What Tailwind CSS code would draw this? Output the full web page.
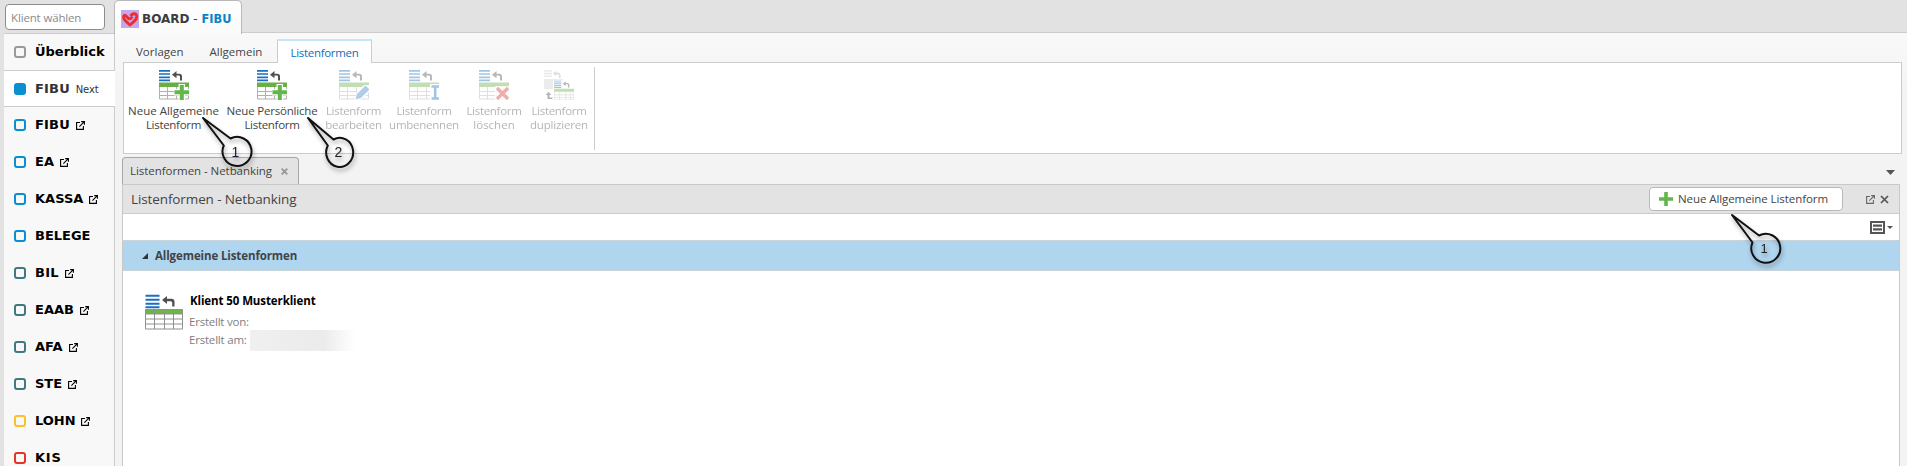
<!DOCTYPE html>
<html lang="de">
<head>
<meta charset="utf-8">
<title>BOARD - FIBU</title>
<script src="https://cdn.jsdelivr.net/npm/@tailwindcss/browser@4"></script>
</head>
<body class="relative flex h-[466px] w-[1907px] overflow-hidden bg-[#e2e2e2] font-['Open_Sans','Noto_Sans',sans-serif] text-[11.5px] text-[#444]">

<svg class="hidden">
  <symbol id="list" viewBox="0 0 30 30">
    <path d="M0 .8h11M0 4h11M0 7.3h11M0 10.4h11" stroke="#1b6fc0" stroke-width="1.7"/>
    <path d="M13 4.7l4.500-3.700v2.700h2.800q2.700 0 2.700 2.700v4.100h-2v-3.700q0-1.300-1.300-1.300h-2.200v2.700z" fill="#505050"/>
    <path d="M.5 17v12h29V17M0 21.500h30M0 25.500h30M8.500 17v12M17.500 17v12M24.500 17v12" fill="none" stroke="#b0b0b0"/>
    <path d="M0 12.500h30v4.500H0z" fill="#6aae48"/>
  </symbol>
  <symbol id="listadd" viewBox="0 0 30 30">
    <use href="#list" width="30" height="30"/>
    <path d="M22.800 14v16M15 22.300h16" stroke="#fff" stroke-width="6.500"/>
    <path d="M22.800 15v15M15.500 22.300h14.500" stroke="#63b64a" stroke-width="4"/>
  </symbol>
  <symbol id="pop" viewBox="0 0 9 9">
    <path d="M4 1.500H.6v6.900h6.800V5M5.200.6h3.200v3.200M8.300.7L3.400 5.600" fill="none" stroke="currentColor" stroke-width="1.100"/>
  </symbol>
  <linearGradient id="bubble" x1="0" y1="0" x2="1" y2="1"><stop offset="0" stop-color="#aaa"/><stop offset=".6" stop-color="#e4e4e4"/><stop offset="1" stop-color="#d8d8d8"/></linearGradient>
</svg>

<!-- Sidebar -->
<aside class="flex w-[115px] shrink-0 flex-col pl-1">
  <div class="h-[33px] shrink-0 px-px pt-1">
    <div class="flex h-[26px] w-[100px] items-center rounded-[4px] border border-[#8c8c8c] bg-white pl-[5px] pb-px pt-0.5 tracking-[-0.15px] text-[#8b8b8b]">Klient wählen</div>
  </div>
  <nav class="flex h-[433px] flex-col overflow-hidden bg-[#f8f8f8] font-['DejaVu_Sans',sans-serif] text-[13px] font-bold text-black">
    <div class="flex h-[37px] shrink-0 items-center gap-[9px] border-t border-r border-[#ccc] pl-2.5"><i class="size-3 rounded-[3px] border-2 border-[#999]"></i>Überblick</div>
    <div class="flex h-[37px] shrink-0 items-center gap-[9px] border-y border-[#ccc] bg-white pl-2.5 text-[#333]"><i class="size-3 rounded-[3px] border-2 border-[#0a8fd0] bg-[#0a8fd0]"></i><span class="tracking-[0.2px]">FIBU <span class="ml-px text-[10px] font-normal tracking-[-0.1px]">Next</span></span></div>
    <div class="flex h-[37px] shrink-0 items-center gap-[9px] border-r border-[#ccc] pb-px pl-2.5"><i class="size-3 rounded-[3px] border-2 border-[#0a8fd0]"></i><span class="tracking-[0.2px]">FIBU</span><svg class="-ml-[3px] size-[9px]"><use href="#pop"/></svg></div>
    <div class="flex h-[37px] shrink-0 items-center gap-[9px] border-r border-[#ccc] pb-px pl-2.5"><i class="size-3 rounded-[3px] border-2 border-[#0a8fd0]"></i>EA<svg class="-ml-[3px] size-[9px]"><use href="#pop"/></svg></div>
    <div class="flex h-[37px] shrink-0 items-center gap-[9px] border-r border-[#ccc] pb-px pl-2.5"><i class="size-3 rounded-[3px] border-2 border-[#0a8fd0]"></i>KASSA<svg class="-ml-[3px] size-[9px]"><use href="#pop"/></svg></div>
    <div class="flex h-[37px] shrink-0 items-center gap-[9px] border-r border-[#ccc] pb-px pl-2.5"><i class="size-3 rounded-[3px] border-2 border-[#0a8fd0]"></i>BELEGE</div>
    <div class="flex h-[37px] shrink-0 items-center gap-[9px] border-r border-[#ccc] pb-px pl-2.5"><i class="size-3 rounded-[3px] border-2 border-[#3f7a80]"></i><span class="tracking-[0.3px]">BIL</span><svg class="-ml-[3px] size-[9px]"><use href="#pop"/></svg></div>
    <div class="flex h-[37px] shrink-0 items-center gap-[9px] border-r border-[#ccc] pb-px pl-2.5"><i class="size-3 rounded-[3px] border-2 border-[#3f7a80]"></i>EAAB<svg class="-ml-[3px] size-[9px]"><use href="#pop"/></svg></div>
    <div class="flex h-[37px] shrink-0 items-center gap-[9px] border-r border-[#ccc] pb-px pl-2.5"><i class="size-3 rounded-[3px] border-2 border-[#3f7a80]"></i>AFA<svg class="-ml-[3px] size-[9px]"><use href="#pop"/></svg></div>
    <div class="flex h-[37px] shrink-0 items-center gap-[9px] border-r border-[#ccc] pb-px pl-2.5"><i class="size-3 rounded-[3px] border-2 border-[#3f7a80]"></i>STE<svg class="-ml-[3px] size-[9px]"><use href="#pop"/></svg></div>
    <div class="flex h-[37px] shrink-0 items-center gap-[9px] border-r border-[#ccc] pb-px pl-2.5"><i class="size-3 rounded-[3px] border-2 border-[#fbc02d]"></i>LOHN<svg class="-ml-1 size-[9px]"><use href="#pop"/></svg></div>
    <div class="flex h-[37px] shrink-0 items-center gap-[9px] border-r border-[#ccc] pb-px pl-2.5"><i class="size-3 rounded-[3px] border-2 border-[#e53529]"></i><span class="tracking-[0.8px]">KIS</span></div>
  </nav>
</aside>

<main class="-ml-px flex h-[466px] flex-1 flex-col">
  <!-- Window tab strip -->
  <div class="flex h-[33px] shrink-0">
    <div class="z-10 flex h-[34px] w-32 items-center rounded-t-[5px] border border-b-0 border-[#b8b8b8] bg-gradient-to-b from-white to-[#fafafa] pt-[3px] pl-1.5 font-['DejaVu_Sans',sans-serif] font-bold">
      <svg class="mr-[3px] size-[18px] shrink-0" viewBox="0 0 18 18"><path d="M0 0h18v18H0z" fill="#c9a6ec"/><path d="M8.500 9.500l3-2.800M8.500 9.500L5.800 6.800C4.500 5.500 3.200 4.500 2.700 6.200c-.6 2 .8 3.800 2.300 5.200L9 15l4-3.600c2-1.800 3.400-3.800 2.600-6C14.800 3.400 12.500 3.300 11 4.500L9.500 6" fill="none" stroke="#e9302d" stroke-width="2.900" stroke-linejoin="round"/></svg>
      <span class="pt-px text-[12px] whitespace-nowrap text-[#3c3c3c]">BOARD<span class="font-normal"> - </span><span class="text-[11.400px] text-[#0a84c6]">FIBU</span></span>
    </div>
    <div class="-ml-0.5 flex-1 border-b border-[#ccc]"></div>
  </div>

  <div class="ml-px flex flex-1 flex-col bg-[linear-gradient(#f9f9f9,#f3f3f3_60px)] pl-[7px]">
    <!-- Ribbon tabs -->
    <div class="flex h-[29px] shrink-0 items-end">
      <div class="flex h-5 w-[155px] items-center gap-[26px] pl-3.5"><span>Vorlagen</span><span>Allgemein</span></div>
      <div class="z-10 -mb-px flex h-[24px] w-[95px] items-center justify-center border border-t-2 border-b-0 border-[#ccc] border-t-[#c5e6f8] bg-white pt-0.5 tracking-[-0.3px] text-[#0f6fba]">Listenformen</div>
    </div>
    <!-- Ribbon -->
    <section class="mr-[5px] ml-px flex h-[92px] shrink-0 border border-[#ccc] bg-white text-center leading-[14px] whitespace-nowrap">
      <div class="-ml-px flex w-[101px] flex-col items-center pt-[7px]"><svg class="mb-1 size-[30px]"><use href="#listadd"/></svg><span>Neue Allgemeine</span><span class="tracking-[-0.3px]">Listenform</span></div>
      <div class="flex w-[96px] flex-col items-center pt-[7px]"><svg class="mb-1 size-[30px]"><use href="#listadd"/></svg><span class="tracking-[-0.19px]">Neue Persönliche</span><span class="tracking-[-0.3px]">Listenform</span></div>
      <div class="flex w-[67px] flex-col items-center pt-[7px] opacity-40">
        <svg class="mb-1 size-[30px]" viewBox="0 0 30 30"><use href="#list" width="30" height="30"/><path d="M15 31l3-9 7-7h6v6l-8 8z" fill="#fff"/><path d="M16.500 29.500l1.500-5.500 8.500-8.500 4 4-8.500 8.500z" fill="#3a82cc"/></svg>
        <span class="tracking-[-0.3px]">Listenform</span><span class="tracking-[-0.2px]">bearbeiten</span></div>
      <div class="flex w-[74px] flex-col items-center pt-[7px] opacity-40">
        <svg class="mb-1 size-[30px]" viewBox="0 0 30 30"><use href="#list" width="30" height="30"/><path d="M21 14h9v16h-9z" fill="#fff"/><path d="M22.500 16.500h7.500M26.200 16.500v12M22.500 28.500h7.500" fill="none" stroke="#1b6fc0" stroke-width="2.600"/></svg>
        <span class="tracking-[-0.3px]">Listenform</span><span class="tracking-[-0.25px]">umbenennen</span></div>
      <div class="flex w-[66px] flex-col items-center pt-[7px] opacity-40">
        <svg class="mb-1 size-[30px]" viewBox="0 0 30 30"><use href="#list" width="30" height="30"/><path d="M16 16h14v14H16z" fill="#fff" fill-opacity=".8"/><path d="M18 18l11 11M29 18L18 29" stroke="#e03530" stroke-width="3.400"/></svg>
        <span class="tracking-[-0.3px]">Listenform</span><span>löschen</span></div>
      <div class="flex w-[64px] flex-col items-center pt-[7px] opacity-40">
        <svg class="mb-1 size-[30px]" viewBox="0 0 30 30"><g opacity=".45"><path d="M0 .8h8M0 3.500h8M0 6.200h8" stroke="#777" stroke-width="1.300"/><path d="M9 3.500l3-2.700v1.700h2q2.500 0 2.500 2.500v3H15V5.500Q15 4.500 14 4.500h-2v1.700z" fill="#505050"/><path d="M0 9h19v10H0z" fill="#999"/></g><path d="M9 10.500h21v19.500H9z" fill="#fff"/><use href="#list" x="10" y="10.500" width="20" height="20"/><path d="M4.500 22l3 3H5.500v2.500h3V29H3.500v-4h-2z" fill="#444"/></svg>
        <span class="tracking-[-0.3px]">Listenform</span><span class="tracking-[-0.17px]">duplizieren</span></div>
      <div class="mt-1 mb-[3px] ml-[3px] w-px bg-[#ccc]"></div>
    </section>

    <!-- Document tabs -->
    <div class="flex h-[30px] shrink-0 items-end justify-between pr-3">
      <div class="z-10 flex h-[27px] w-[177px] items-center rounded-t-[4px] border border-b-0 border-[#a8a8a8] bg-[#e3e3e3] pl-[7px]"><span class="tracking-[-0.05px]">Listenformen - Netbanking</span>
        <svg class="ml-[9px] size-[7px]" viewBox="0 0 7 7"><path d="M.7.700l5.600 5.600M6.300.7L.7 6.300" stroke="#999" stroke-width="1.900"/></svg></div>
      <svg class="mb-[9px] h-[5px] w-[9px]" viewBox="0 0 9 5"><path d="M0 0h9L4.500 5z" fill="#555"/></svg>
    </div>

    <section class="mr-[7px] flex flex-1 flex-col border-x border-t border-[#c9c9c9] bg-white">
      <header class="flex h-[29px] shrink-0 items-center border-b border-[#ccc] bg-[#e3e3e3] pr-2.5 pl-2">
        <h1 class="flex-1 text-[13.500px] tracking-[-0.11px]">Listenformen - Netbanking</h1>
        <div class="mr-[23px] flex h-6 w-[194px] items-center rounded-[4px] border border-[#b8b8b8] bg-white pl-[9px] tracking-[-0.08px]"><svg class="mr-[5px] size-[14px]" viewBox="0 0 14 14"><path d="M7 0v14M0 7h14" stroke="#63b64a" stroke-width="3.600"/></svg>Neue Allgemeine Listenform</div>
        <svg class="mr-[5px] size-[9px] text-[#666]"><use href="#pop"/></svg>
        <svg class="size-[9px]" viewBox="0 0 9 9"><path d="M1 1l7 7M8 1L1 8" stroke="#555" stroke-width="1.700"/></svg>
      </header>
      <div class="flex h-[26px] shrink-0 items-center justify-end gap-[2px] pt-px pr-1.5">
        <svg class="h-[13px] w-[15px]" viewBox="0 0 15 13"><path d="M1 1h13v11H1z" fill="#fff" stroke="#555" stroke-width="2"/><path d="M3 4.600h9M3 8.400h9" stroke="#555" stroke-width="2.400"/></svg>
        <svg class="h-[3px] w-[6px]" viewBox="0 0 6 3"><path d="M0 0h6L3 3z" fill="#555"/></svg>
      </div>
      <div class="flex h-[31px] shrink-0 items-center border-y border-[#c9d3da] bg-[#b0d5ef] pl-[19px] font-bold text-[#3f4448]"><svg class="mr-[7px] size-1.5" viewBox="0 0 6 6"><path d="M6 0v6H0z" fill="#333"/></svg><span class="tracking-[-0.11px]">Allgemeine Listenformen</span></div>
      <div class="flex pt-[22px] pl-[22px]">
        <svg class="mt-px h-9 w-[38px]" viewBox="0 0 38 36"><path d="M.5 1.800h14M.5 5.800h14M.5 9.800h14M.5 13.300h14" stroke="#1b6fc0" stroke-width="2"/><path d="M17 6l5-4v2.800h4.500q3 0 3 3v4.700h-2.300V8.700q0-1.500-1.500-1.500H22V10z" fill="#505050"/><path d="M.5 15.500h37v4.500H.5z" fill="#6fb54c"/><path d="M.5 15.500h37v19.500H.5zM.5 20h37M.5 25h37M.5 30h37M9.500 15.500V35M19.500 15.500V35M28.500 15.500V35" fill="none" stroke="#909090"/></svg>
        <div class="ml-[6px] text-[#808080]">
          <div class="h-[18px] pl-px leading-[16px] font-bold tracking-[-0.1px] text-black">Klient 50 Musterklient</div>
          <div class="h-[18px] leading-[22px] tracking-[-0.23px]">Erstellt von:</div>
          <div class="flex h-[22px] items-center tracking-[-0.2px]"><span class="h-[21px] w-[61px] leading-[20px]">Erstellt am:</span><span class="h-[21px] w-[105px] bg-gradient-to-r from-[#f0f0f0] via-[#ebebeb] via-70% to-white"></span></div>
        </div>
      </div>
    </section>
  </div>
</main>

<!-- Numbered callouts -->
<svg class="absolute top-[114px] left-[199px] z-20 h-[62px] w-[64px] drop-shadow-[1px_3px_2px_rgba(0,0,0,0.35)]" viewBox="0 0 64 62"><path d="M4 4L31.500 24.500A14.500 14.500 0 1 1 24.800 31.500z" fill="url(#bubble)" fill-opacity=".8" stroke="#111" stroke-width="2" stroke-linejoin="round"/><text x="36.500" y="43" text-anchor="middle" font-family="Liberation Sans, sans-serif" font-size="14" fill="#211a3a">1</text></svg>
<svg class="absolute top-[114px] left-[303px] z-20 h-[62px] w-[64px] drop-shadow-[1px_3px_2px_rgba(0,0,0,0.35)]" viewBox="0 0 64 62"><path d="M5 4L30.500 25.500A13.500 14.500 0 1 1 24.800 31.500z" fill="url(#bubble)" fill-opacity=".85" stroke="#111" stroke-width="2" stroke-linejoin="round"/><text x="35.500" y="43" text-anchor="middle" font-family="Liberation Sans, sans-serif" font-size="14" fill="#222">2</text></svg>
<svg class="absolute top-[211px] left-[1727px] z-20 h-[62px] w-[64px] drop-shadow-[1px_3px_2px_rgba(0,0,0,0.35)]" viewBox="0 0 64 62"><path d="M5 4L32 24.500A14.500 14.500 0 1 1 25.500 31.500z" fill="url(#bubble)" fill-opacity=".8" stroke="#111" stroke-width="2" stroke-linejoin="round"/><text x="37" y="42" text-anchor="middle" font-family="Liberation Sans, sans-serif" font-size="13" fill="#222">1</text></svg>
</body>
</html>
